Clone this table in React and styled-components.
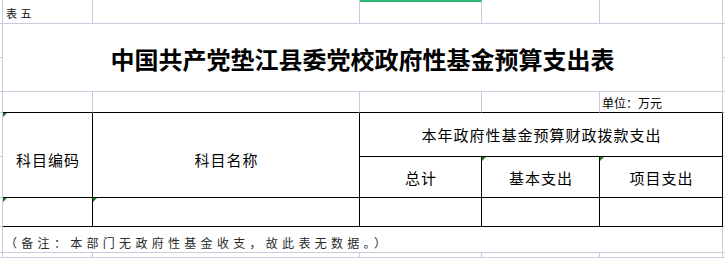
import React from "react";
import styled, { createGlobalStyle } from "styled-components";

const GRID = "#c7cbdc";
const CJK = `"Noto Sans CJK SC", "Noto Sans", sans-serif`;

const Global = createGlobalStyle`
  html, body { margin: 0; padding: 0; background: #fff; }
  body { font-family: ${CJK}; color: #000; }
`;

const Sheet = styled.div`
  display: grid;
  grid-template-columns: 3px 90px 267px 122px 118px 123px 2px;
  grid-template-rows: 24px 34px 34px 21px 44px 41px 29px 26px 5px;
  width: 725px;
  height: 258px;
  overflow: hidden;
  background: #fff;
`;

const Cell = styled.div`
  box-sizing: border-box;
  position: relative;
  min-width: 0;
  overflow: hidden;
  grid-column: ${(p) => p.$col} / span ${(p) => p.$cs || 1};
  grid-row: ${(p) => p.$row} / span ${(p) => p.$rs || 1};
  border-right: ${(p) => (p.$noRight ? "none" : `1px solid ${p.$rb ? "#000" : GRID}`)};
  border-bottom: 1px solid ${(p) => (p.$bb ? "#000" : GRID)};
  border-top: ${(p) => (p.$selected ? "2px solid #2bb673" : "none")};
  display: flex;
  align-items: center;
  justify-content: ${(p) => p.$justify || "flex-start"};
`;

const Caption = styled(Cell)`
  font-size: 11px;
  letter-spacing: 3.5px;
  padding-left: 3px;
  padding-top: 2px;
  color: #111;
  white-space: nowrap;
`;

const Title = styled(Cell)`
  justify-content: center;
  font-size: 24px;
  font-weight: 700;
  padding-top: 1px;
  white-space: nowrap;
`;

const Unit = styled(Cell)`
  font-size: 12px;
  padding-left: 2px;
  white-space: nowrap;
`;

const Header = styled(Cell)`
  justify-content: center;
  font-size: 15px;
  letter-spacing: 1px;
  padding-left: 1px;
  padding-top: ${(p) => p.$drop || 0}px;
  white-space: nowrap;
`;

const Note = styled(Cell)`
  font-size: 12px;
  letter-spacing: 4.3px;
  padding-left: 2px;
  padding-top: 5px;
  color: #2a2a2a;
  white-space: nowrap;
`;

const Marker = styled.span`
  position: absolute;
  top: 0;
  left: 0;
  width: 0;
  height: 0;
  border-top: 4px solid #1a7f22;
  border-right: 4px solid transparent;
`;

const cols = [2, 3, 4, 5, 6];

export default function App() {
  return (
    <>
      <Global />
      <Sheet>
        {/* row 1 */}
        <Cell $col={1} $row={1} />
        <Caption $col={2} $row={1}>表五</Caption>
        <Cell $col={3} $row={1} />
        <Cell $col={4} $row={1} $selected />
        <Cell $col={5} $row={1} />
        <Cell $col={6} $row={1} />
        <Cell $col={7} $row={1} $noRight />

        {/* title rows 2-3 */}
        <Cell $col={1} $row={2} />
        <Cell $col={1} $row={3} />
        <Title $col={2} $cs={5} $row={2} $rs={2}>
          中国共产党垫江县委党校政府性基金预算支出表
        </Title>
        <Cell $col={7} $row={2} $noRight />
        <Cell $col={7} $row={3} $noRight />

        {/* unit row 4 */}
        <Cell $col={1} $row={4} />
        <Cell $col={2} $row={4} $bb />
        <Cell $col={3} $row={4} $bb />
        <Cell $col={4} $row={4} $bb />
        <Cell $col={5} $row={4} $bb />
        <Unit $col={6} $row={4} $bb>单位：万元</Unit>
        <Cell $col={7} $row={4} $noRight />

        {/* header rows 5-6 */}
        <Cell $col={1} $row={5} />
        <Cell $col={1} $row={6} />
        <Header $col={2} $row={5} $rs={2} $rb $bb $drop={9}>
          <Marker />
          科目编码
        </Header>
        <Header $col={3} $row={5} $rs={2} $rb $bb $drop={9}>
          科目名称
        </Header>
        <Header $col={4} $cs={3} $row={5} $rb $bb>
          本年政府性基金预算财政拨款支出
        </Header>
        <Header $col={4} $row={6} $rb $bb>总计</Header>
        <Header $col={5} $row={6} $rb $bb>
          <Marker />
          基本支出
        </Header>
        <Header $col={6} $row={6} $rb $bb>
          <Marker />
          项目支出
        </Header>
        <Cell $col={7} $row={5} $noRight />
        <Cell $col={7} $row={6} $noRight />

        {/* data row 7 */}
        <Cell $col={1} $row={7} />
        {cols.map((c) => (
          <Cell key={c} $col={c} $row={7} $rb $bb>
            {c <= 3 && <Marker />}
          </Cell>
        ))}
        <Cell $col={7} $row={7} $noRight />

        {/* note row 8 */}
        <Cell $col={1} $row={8} />
        <Note $col={2} $cs={5} $row={8}>
          （备注：本部门无政府性基金收支，故此表无数据。）
        </Note>
        <Cell $col={7} $row={8} $noRight />

        {/* row 9 */}
        <Cell $col={1} $row={9} />
        {cols.map((c) => (
          <Cell key={c} $col={c} $row={9} />
        ))}
        <Cell $col={7} $row={9} $noRight />
      </Sheet>
    </>
  );
}
